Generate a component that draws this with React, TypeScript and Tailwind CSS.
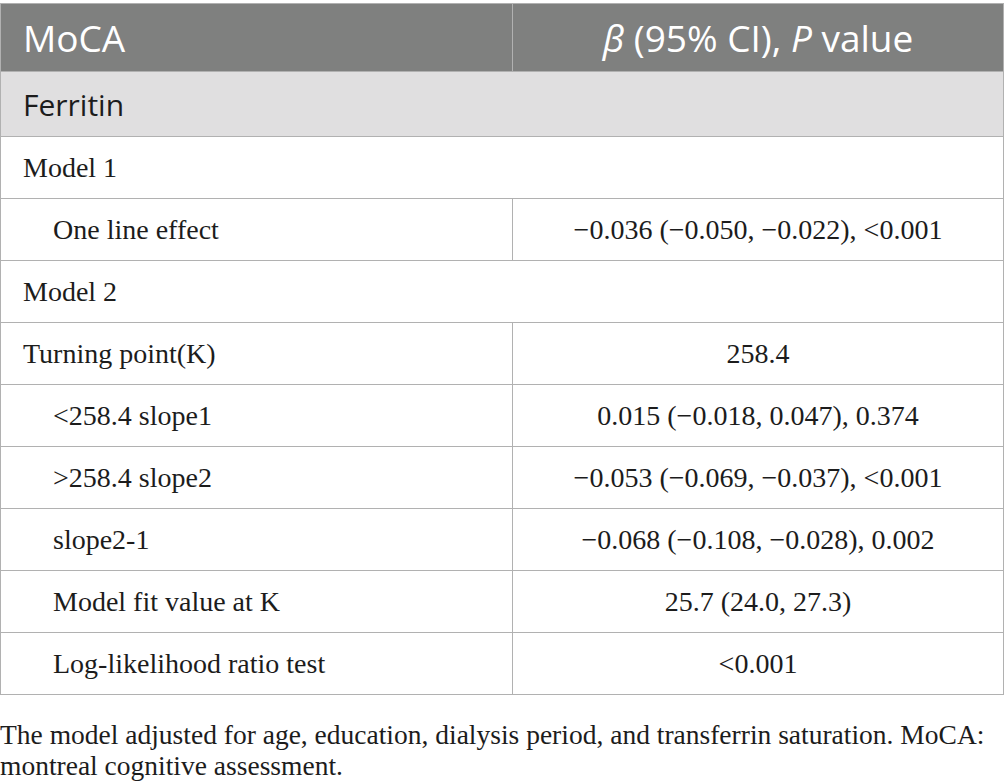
import React from "react";

const serif = "font-['Liberation_Serif','Times_New_Roman',serif]";
const sans = "font-['Open_Sans','Noto_Sans',sans-serif]";

type Row =
  | { kind: "group"; label: string }
  | { kind: "data"; label: string; value: string; indent?: boolean };

const rows: Row[] = [
  { kind: "group", label: "Model 1" },
  { kind: "data", label: "One line effect", value: "−0.036 (−0.050, −0.022), <0.001", indent: true },
  { kind: "group", label: "Model 2" },
  { kind: "data", label: "Turning point(K)", value: "258.4" },
  { kind: "data", label: "<258.4 slope1", value: "0.015 (−0.018, 0.047), 0.374", indent: true },
  { kind: "data", label: ">258.4 slope2", value: "−0.053 (−0.069, −0.037), <0.001", indent: true },
  { kind: "data", label: "slope2-1", value: "−0.068 (−0.108, −0.028), 0.002", indent: true },
  { kind: "data", label: "Model fit value at K", value: "25.7 (24.0, 27.3)", indent: true },
  { kind: "data", label: "Log-likelihood ratio test", value: "<0.001", indent: true },
];

export default function App() {
  return (
    <div className="w-[1005px] h-[783px] bg-white overflow-hidden pt-[3px]">
      <table className="w-[1004px] border-collapse table-fixed">
        <colgroup>
          <col className="w-[512px]" />
          <col />
        </colgroup>
        <thead>
          <tr className="bg-[#7f807f] text-white h-[68px]">
            <th className={`${sans} border border-[#b1b1b1] text-left font-normal text-[37px] pl-[22px]`}>
              MoCA
            </th>
            <th className={`${sans} border border-[#b1b1b1] text-center font-normal text-[37px]`}>
              <i>β</i> (95% CI), <i>P</i> value
            </th>
          </tr>
        </thead>
        <tbody className={`${serif} text-[28px] text-[#1c1c1c]`}>
          <tr className="bg-[#e0dfe0] h-[65px]">
            <td colSpan={2} className={`${sans} border border-[#b1b1b1] pl-[22px] text-[30px]`}>
              Ferritin
            </td>
          </tr>
          {rows.map((r, i) =>
            r.kind === "group" ? (
              <tr key={i} className="h-[62px]">
                <td colSpan={2} className="border border-[#b1b1b1] pl-[22px]">
                  {r.label}
                </td>
              </tr>
            ) : (
              <tr key={i} className="h-[62px]">
                <td className={`border border-[#b1b1b1] ${r.indent ? "pl-[52px]" : "pl-[22px]"}`}>
                  {r.label}
                </td>
                <td className="border border-[#b1b1b1] text-center">{r.value}</td>
              </tr>
            )
          )}
        </tbody>
      </table>
      <p className={`${serif} text-[27.5px] leading-[31px] text-[#1c1c1c] mt-[24px] pr-[6px]`}>
        The model adjusted for age, education, dialysis period, and transferrin saturation. MoCA:
        montreal cognitive assessment.
      </p>
    </div>
  );
}
